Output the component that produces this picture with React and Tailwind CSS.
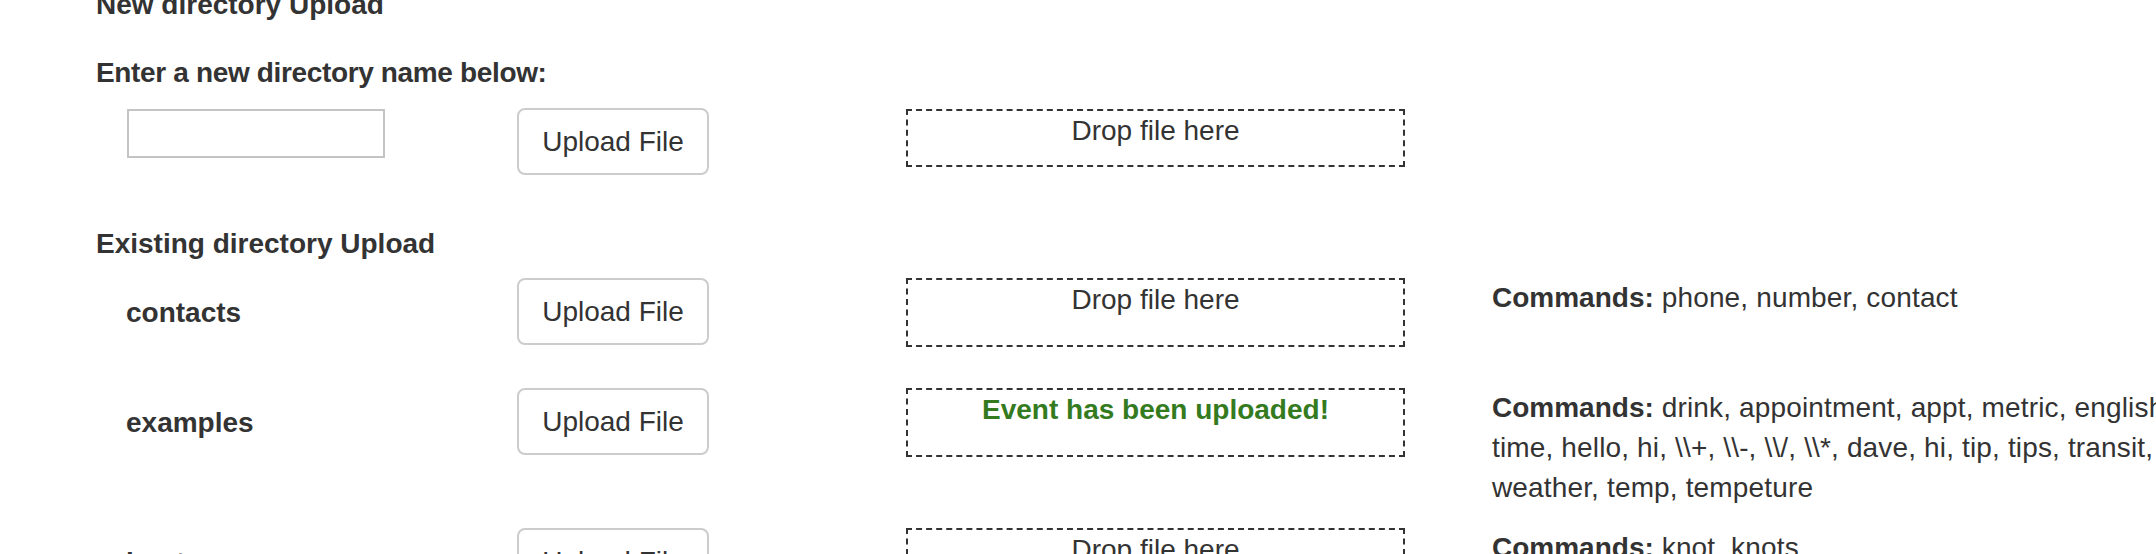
import React from 'react';

const directories = [
  {
    name: 'contacts',
    commands: 'phone, number, contact',
    uploaded: false,
  },
  {
    name: 'examples',
    commands:
      'drink, appointment, appt, metric, english, imperial, date, time, hello, hi, \\\\+, \\\\-, \\\\/, \\\\*, dave, hi, tip, tips, transit, bus, train, rail, weather, temp, tempeture',
    uploaded: true,
  },
  {
    name: 'knots',
    commands: 'knot, knots',
    uploaded: false,
  },
];

function UploadButton() {
  return (
    <button
      type="button"
      className="w-[192px] h-[67px] bg-white border-2 border-[#cccccc] rounded-[8px] text-[28px] leading-[40px] text-[#333]"
    >
      Upload File
    </button>
  );
}

function DropZone({ uploaded, className }) {
  return (
    <div className={`w-[499px] border-2 border-dashed border-[#333] text-center ${className}`}>
      {uploaded ? (
        <span className="font-bold text-[#347b1f]">Event has been uploaded!</span>
      ) : (
        'Drop file here'
      )}
    </div>
  );
}

export default function App() {
  return (
    <div className="w-full h-[554px] overflow-hidden bg-white text-[#333] text-[28px] leading-[40px] font-['Liberation_Sans',Arial,sans-serif]">
      <div className="pl-[96px]">
        {/* New directory */}
        <h3 className="-mt-[15px] font-bold">New directory Upload</h3>
        <p className="mt-[28px] font-bold tracking-[-0.35px]">Enter a new directory name below:</p>

        <div className="mt-[15px] flex items-start">
          <div className="w-[421px] shrink-0 pl-[31px] pt-px">
            <input
              type="text"
              className="block w-[258px] h-[49px] border-2 border-[#c4c4c4] bg-white px-2 outline-none"
            />
          </div>
          <div className="w-[389px] shrink-0">
            <UploadButton />
          </div>
          <div className="w-[586px] shrink-0 pt-px">
            <DropZone className="h-[58px]" />
          </div>
        </div>

        {/* Existing directories */}
        <h3 className="mt-[49px] font-bold">Existing directory Upload</h3>

        <div className="mt-[14px]">
          {directories.map((dir) => (
            <div key={dir.name} className="flex items-start min-h-[110px]">
              <div className="w-[421px] shrink-0 pl-[30px] pt-[15px] font-bold">{dir.name}</div>
              <div className="w-[389px] shrink-0">
                <UploadButton />
              </div>
              <div className="w-[586px] shrink-0">
                <DropZone uploaded={dir.uploaded} className="h-[69px]" />
              </div>
              <div className="w-[900px] shrink-0 pb-[20px] tracking-[0.15px]">
                <span className="font-bold tracking-normal">Commands:</span> {dir.commands}
              </div>
            </div>
          ))}
        </div>
      </div>
    </div>
  );
}
